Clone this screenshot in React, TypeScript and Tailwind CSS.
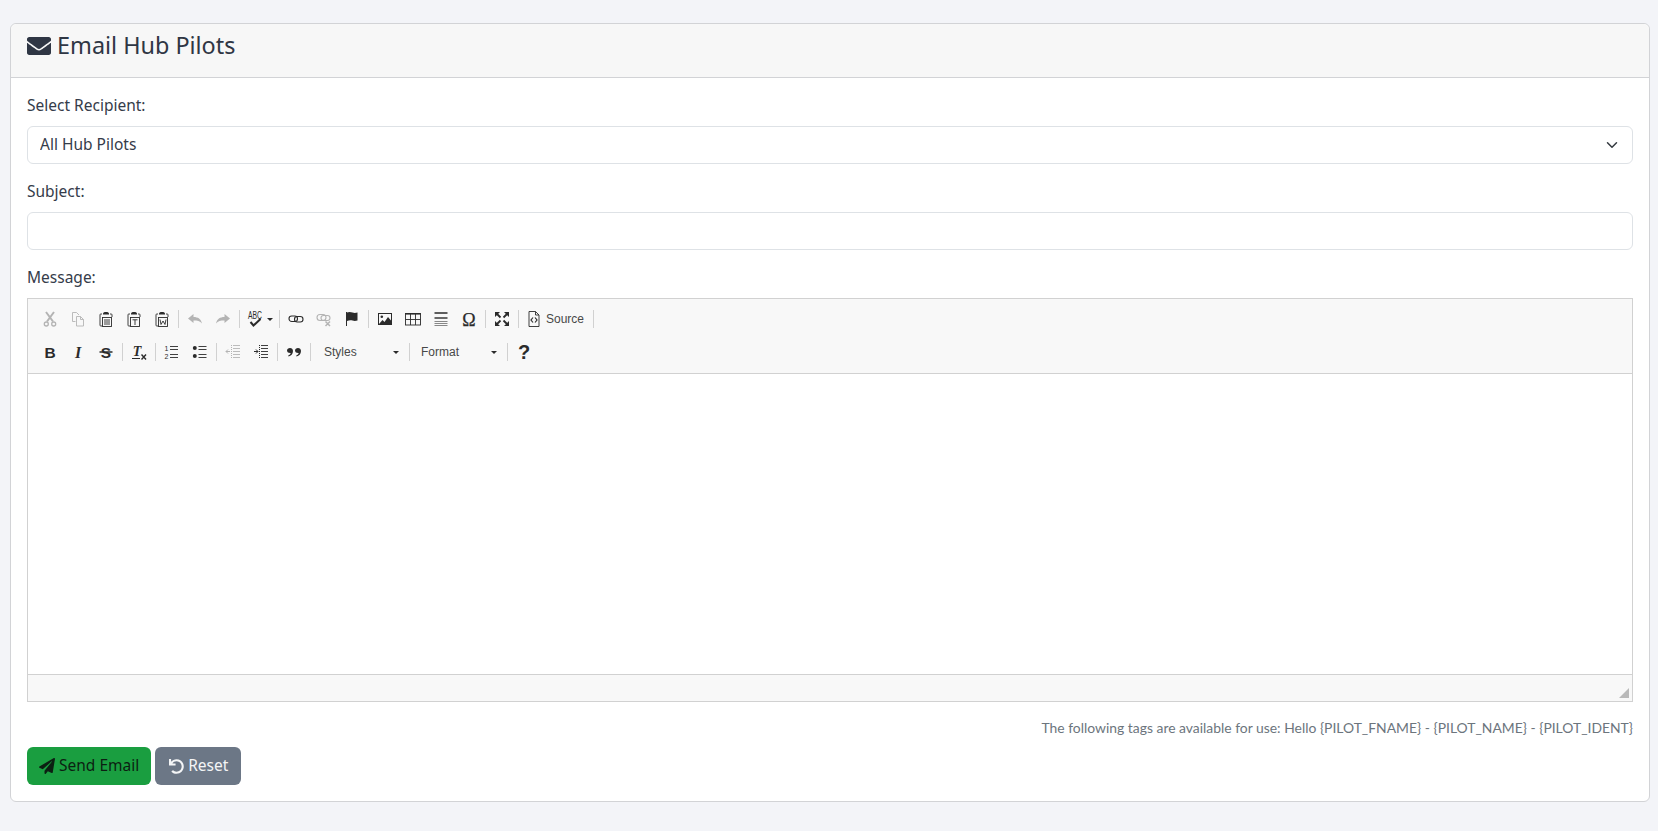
import React from 'react';
import { FaEnvelope, FaPaperPlane, FaUndo } from 'react-icons/fa';

// toolbar glyphs, all on a 16x16 grid
const glyphFont = { fontFamily: '"Liberation Sans", sans-serif' };
const serifFont = { fontFamily: '"Liberation Serif", serif' };

const clip = (
  <>
    <path d="M4 3H2.800a.8.8 0 0 0-.8.8v10.400a.8.8 0 0 0 .8.8H4" fill="none" stroke="currentColor" strokeWidth=".9" />
    <path d="M12 3h1.200a.8.8 0 0 1 .8.8V6" fill="none" stroke="currentColor" strokeWidth=".9" />
    <path d="M5 3.500V2.500C5 1.700 6 1 8 1s3 .7 3 1.500v1z" fill="currentColor" />
    <rect x="4.500" y="6.500" width="9" height="9" fill="none" stroke="currentColor" strokeWidth=".9" />
  </>
);

const icons: Record<string, React.ReactNode> = {
  cut: (
    <>
      <path d="M4 1l7 9.500M12 1L5 10.500" stroke="currentColor" strokeWidth="2" fill="none" />
      <circle cx="4.300" cy="13" r="2" stroke="currentColor" strokeWidth="1.300" fill="none" />
      <circle cx="11.700" cy="13" r="2" stroke="currentColor" strokeWidth="1.300" fill="none" />
    </>
  ),
  copy: (
    <path
      d="M5.500 10.500h-3v-9h4l2.500 2.500M6.500 5.500h4l3 3v6.500h-7zM10.500 5.500v3h3"
      stroke="currentColor"
      strokeWidth=".9"
      fill="none"
    />
  ),
  paste: (
    <>
      {clip}
      <path d="M6 9h6M6 11h6M6 13h6" stroke="currentColor" strokeWidth=".9" fill="none" />
    </>
  ),
  pasteText: (
    <>
      {clip}
      <path d="M6.500 8.800h5M9 8.800V14" stroke="currentColor" strokeWidth=".9" fill="none" />
    </>
  ),
  pasteWord: (
    <>
      {clip}
      <path d="M6 8.500l1 5 2-3.500 2 3.500 1-5" stroke="currentColor" strokeWidth=".9" fill="none" />
    </>
  ),
  undo: <path d="M1 7.500L6.500 3v3c4.500 0 7.500 2 8.500 6.500-2-2.500-4.500-3-8.500-3V12z" fill="currentColor" />,
  redo: <path d="M15 7.500L9.500 3v3C5 6 2 8 1 12.500c2-2.500 4.500-3 8.500-3V12z" fill="currentColor" />,
  spell: (
    <>
      <text x="0" y="7.500" textLength="14" lengthAdjust="spacingAndGlyphs" fontSize="10" fill="currentColor" style={glyphFont}>
        ABC
      </text>
      <path d="M2.500 11l3 3.500 7-6.500" stroke="currentColor" strokeWidth="2" fill="none" />
    </>
  ),
  link: (
    <>
      <rect x="1" y="5" width="8.500" height="5.500" rx="2.750" stroke="currentColor" strokeWidth="1.100" fill="none" />
      <rect x="6.500" y="5.500" width="8.500" height="5.500" rx="2.750" stroke="currentColor" strokeWidth="1.100" fill="none" />
    </>
  ),
  unlink: (
    <>
      <rect x="1" y="3.500" width="9" height="6" rx="3" stroke="currentColor" strokeWidth="1.100" fill="none" />
      <rect x="5" y="4.500" width="9" height="5" rx="2.500" stroke="currentColor" strokeWidth="1.100" fill="none" />
      <path d="M9.500 10.500l4.500 4.500M14 10.500L9.500 15" stroke="currentColor" strokeWidth="1.500" fill="none" />
    </>
  ),
  anchor: (
    <>
      <path d="M2.500 1v14" stroke="currentColor" fill="none" />
      <path d="M3 1.500c2-1 4-.5 5.500 0s3 .5 5 0v8c-2 .5-3.500.5-5 0S5 9 3 10z" fill="currentColor" />
    </>
  ),
  image: (
    <>
      <rect x="1.500" y="2.500" width="13" height="11" stroke="currentColor" fill="none" />
      <circle cx="4.800" cy="5.800" r="1.300" fill="currentColor" />
      <path d="M2 13l3.500-4 2 2 3.500-5 3 3.500V13z" fill="currentColor" />
    </>
  ),
  table: (
    <>
      <rect x=".5" y="2.500" width="15" height="11.500" stroke="currentColor" strokeWidth=".9" fill="none" />
      <path d="M.5 2.800h15" stroke="currentColor" strokeWidth="1.600" fill="none" />
      <path d="M.5 8.500h15M5.500 3v11M10.500 3v11" stroke="currentColor" strokeWidth=".9" fill="none" />
    </>
  ),
  rule: (
    <>
      <path d="M1.500 2h13" stroke="currentColor" strokeWidth="1.500" fill="none" />
      <path d="M1.500 7h13" stroke="currentColor" strokeWidth="1.400" fill="none" />
      <path d="M1.500 10.500h13M1.500 12.500h13M1.500 14.500h13" stroke="currentColor" strokeOpacity=".55" fill="none" />
    </>
  ),
  special: (
    <text x="8" y="14.500" textAnchor="middle" fontSize="18" fill="currentColor" stroke="currentColor" strokeWidth=".25" style={serifFont}>
      Ω
    </text>
  ),
  maximize: (
    <>
      <path d="M1 1h5L1 6zM15 1v5l-5-5zM1 15v-5l5 5zM15 15h-5l5-5z" fill="currentColor" />
      <path d="M3 3l3.500 3.500M13 3L9.500 6.500M3 13l3.500-3.500M13 13L9.500 9.500" stroke="currentColor" strokeWidth="1.800" fill="none" />
    </>
  ),
  source: (
    <>
      <path d="M3 .5h6.500L13 4v11.500H3zM9.500.5V4H13" stroke="currentColor" strokeWidth=".9" fill="none" />
      <path d="M7 6.500L5 9l2 2.500M9 6.500L11 9l-2 2.500" stroke="currentColor" strokeWidth="1.200" fill="none" />
    </>
  ),
  bold: (
    <text x="8" y="13.500" textAnchor="middle" fontSize="15.500" fontWeight="700" fill="currentColor" style={glyphFont}>
      B
    </text>
  ),
  italic: (
    <text x="8" y="13.500" textAnchor="middle" fontSize="16" fontWeight="700" fontStyle="italic" fill="currentColor" style={serifFont}>
      I
    </text>
  ),
  strike: (
    <>
      <text x="8" y="13.500" textAnchor="middle" fontSize="15.500" fontWeight="700" fill="currentColor" style={glyphFont}>
        S
      </text>
      <path d="M1.500 8h13" stroke="currentColor" strokeWidth="1.500" fill="none" />
    </>
  ),
  removeFormat: (
    <>
      <text x="6" y="12" textAnchor="middle" fontSize="14" fontWeight="700" fontStyle="italic" fill="currentColor" style={serifFont}>
        T
      </text>
      <path d="M1 14.500h8" stroke="currentColor" fill="none" />
      <path d="M10.500 10.500l4.500 5M15 10.500l-4.500 5" stroke="currentColor" strokeWidth="1.400" fill="none" />
    </>
  ),
  numbered: (
    <>
      <text x="2.500" y="7" textAnchor="middle" fontSize="7" fill="currentColor" style={glyphFont}>
        1
      </text>
      <text x="2.500" y="15" textAnchor="middle" fontSize="7" fill="currentColor" style={glyphFont}>
        2
      </text>
      <path d="M6 2.500h8M6 5.500h8M6 10.500h8M6 13.500h8" stroke="currentColor" strokeWidth=".9" fill="none" />
    </>
  ),
  bulleted: (
    <>
      <circle cx="2.800" cy="4" r="2" fill="currentColor" />
      <circle cx="2.800" cy="12" r="2" fill="currentColor" />
      <path d="M6.500 2.500h8M6.500 5.500h8M6.500 10.500h8M6.500 13.500h8" stroke="currentColor" strokeWidth=".9" fill="none" />
    </>
  ),
  outdent: (
    <>
      <path d="M8 1.500h7M8 4.500h7M8 7.500h7M8 10.500h7M8 13.500h7" stroke="currentColor" strokeWidth=".9" fill="none" />
      <path d="M6.500 1v14" stroke="currentColor" strokeDasharray="1 1" fill="none" />
      <path d="M5 7.500H1M3 5.500l-2 2 2 2" stroke="currentColor" fill="none" />
    </>
  ),
  indent: (
    <>
      <path d="M8 1.500h7M8 4.500h7M8 7.500h7M8 10.500h7M8 13.500h7" stroke="currentColor" strokeWidth=".9" fill="none" />
      <path d="M6.500 1v14" stroke="currentColor" strokeDasharray="1 1" fill="none" />
      <path d="M1 7.500h4M3 5.500l2 2-2 2" stroke="currentColor" fill="none" />
    </>
  ),
  quote: (
    <path
      d="M4 4c1.700 0 3 1.200 3 3 0 3-2 5-4.500 5.500l-.3-1C3.500 11 4.500 10 4.700 9 2.800 9.200 1 8.300 1 6.500 1 5 2.300 4 4 4zM12 4c1.700 0 3 1.200 3 3 0 3-2 5-4.500 5.500l-.3-1c1.300-.5 2.300-1.500 2.500-2.500-1.900.2-3.700-.7-3.700-2.500C9 5 10.300 4 12 4z"
      fill="currentColor"
    />
  ),
};

function ToolButton({ icon, muted }: { icon: string; muted?: boolean }) {
  return (
    <span className={`flex h-[26px] w-[28px] items-center justify-center ${muted ? 'text-[#b4b4b4]' : 'text-[#2b2b2b]'}`}>
      <svg viewBox="0 0 16 16" className="h-4 w-4 overflow-visible">
        {icons[icon]}
      </svg>
    </span>
  );
}

function ToolSep() {
  return <span className="mx-[2px] h-[18px] w-px bg-[#d1d1d1]" />;
}

function Caret() {
  return <span className="h-0 w-0 border-x-[3px] border-t-[3px] border-x-transparent border-t-[#2b2b2b]" />;
}

function ToolCombo({ label, className }: { label: string; className: string }) {
  return (
    <span className={`flex h-[26px] items-center justify-between pr-[8px] text-[12px] text-[#484848] ${className}`}>
      {label}
      <Caret />
    </span>
  );
}

function EditorToolbar() {
  return (
    <div className="flex flex-col gap-[7px] border-b border-[#d1d1d1] bg-[#f8f8f8] pb-[8px] pl-[8px] pt-[7px] font-['Liberation_Sans',sans-serif]">
      <div className="flex items-center">
        <ToolButton icon="cut" muted />
        <ToolButton icon="copy" muted />
        <ToolButton icon="paste" />
        <ToolButton icon="pasteText" />
        <ToolButton icon="pasteWord" />
        <ToolSep />
        <ToolButton icon="undo" muted />
        <ToolButton icon="redo" muted />
        <ToolSep />
        <span className="flex h-[26px] w-[35px] items-center gap-[3px] pl-[6px] text-[#2b2b2b]">
          <svg viewBox="0 0 16 16" className="h-4 w-4 overflow-visible">
            {icons.spell}
          </svg>
          <Caret />
        </span>
        <ToolSep />
        <ToolButton icon="link" />
        <ToolButton icon="unlink" muted />
        <ToolButton icon="anchor" />
        <ToolSep />
        <ToolButton icon="image" />
        <ToolButton icon="table" />
        <ToolButton icon="rule" />
        <ToolButton icon="special" />
        <ToolSep />
        <ToolButton icon="maximize" />
        <ToolSep />
        <span className="flex h-[26px] w-[70px] items-center gap-1 pl-[5px] text-[12px] text-[#484848]">
          <svg viewBox="0 0 16 16" className="h-4 w-4 text-[#2b2b2b]">
            {icons.source}
          </svg>
          Source
        </span>
        <ToolSep />
      </div>
      <div className="flex items-center">
        <ToolButton icon="bold" />
        <ToolButton icon="italic" />
        <ToolButton icon="strike" />
        <ToolSep />
        <ToolButton icon="removeFormat" />
        <ToolSep />
        <ToolButton icon="numbered" />
        <ToolButton icon="bulleted" />
        <ToolSep />
        <ToolButton icon="outdent" muted />
        <ToolButton icon="indent" />
        <ToolSep />
        <ToolButton icon="quote" />
        <ToolSep />
        <ToolCombo label="Styles" className="w-[94px] pl-[11px]" />
        <ToolSep />
        <ToolCombo label="Format" className="w-[93px] pl-[9px]" />
        <ToolSep />
        <span className="flex h-[26px] w-[28px] items-center justify-center text-[20px] font-bold leading-none text-[#2b2b2b]">?</span>
      </div>
    </div>
  );
}

function App() {
  return (
    <div className="min-h-[831px] bg-[#f3f4f8] pl-[10px] pr-2 pt-[23px] font-['Noto_Sans',sans-serif] text-[15.5px] text-[#353c4a]">
      <section className="rounded-md border border-[#d2d3d6] bg-white">
        <header className="flex h-[54px] items-center gap-[6px] rounded-t-md border-b border-[#d2d3d6] bg-[#f7f7f7] px-4 pb-[9px]">
          <FaEnvelope className="h-6 w-6 text-[#2f3644]" />
          <h2 className="text-[23.4px] text-[#2f3644]">Email Hub Pilots</h2>
        </header>
        <form className="p-4">
          <label className="mb-2 block h-6 leading-[22px]">Select Recipient:</label>
          <div className="relative mb-4">
            <select className="block h-[38px] w-full appearance-none rounded-md border border-[#dee2e6] bg-white px-3 outline-none">
              <option>All Hub Pilots</option>
            </select>
            <svg viewBox="0 0 16 16" className="absolute right-[15px] top-[13px] h-3 w-3" fill="none" stroke="#343a40" strokeWidth="2" strokeLinecap="round" strokeLinejoin="round">
              <path d="m2 5 6 6 6-6" />
            </svg>
          </div>
          <label className="mb-2 block h-6 leading-[22px]">Subject:</label>
          <input className="mb-4 block h-[38px] w-full rounded-md border border-[#dee2e6] bg-white px-3 outline-none" />
          <label className="mb-2 block h-6 leading-[22px]">Message:</label>
          <div className="border border-[#d1d1d1]">
            <EditorToolbar />
            <div className="h-[300px] bg-white" />
            <div className="flex h-[27px] items-end justify-end border-t border-[#d1d1d1] bg-[#f8f8f8] pb-[3px] pr-[3px]">
              <svg viewBox="0 0 10 10" className="h-[10px] w-[10px]">
                <path d="M10 0v10H0z" fill="#b9b9b9" />
              </svg>
            </div>
          </div>
          <p className="mb-[7px] mt-[14px] h-6 text-right font-['Lato',sans-serif] text-[13.9px] leading-6 text-[#6c757d]">
            The following tags are available for use: Hello {'{PILOT_FNAME}'} - {'{PILOT_NAME}'} - {'{PILOT_IDENT}'}
          </p>
          <div className="flex gap-1">
            <button type="button" className="flex h-[38px] items-center gap-1 rounded-md bg-[#1a9e40] px-3 text-[#0c1f12]">
              <FaPaperPlane className="h-4 w-4" />
              Send Email
            </button>
            <button type="button" className="flex h-[38px] items-center gap-1 rounded-md bg-[#6c7786] pl-[14px] pr-[13px] text-[#f4f5f6]">
              <FaUndo className="h-[15px] w-[15px]" />
              Reset
            </button>
          </div>
        </form>
      </section>
    </div>
  );
}

export default App;
